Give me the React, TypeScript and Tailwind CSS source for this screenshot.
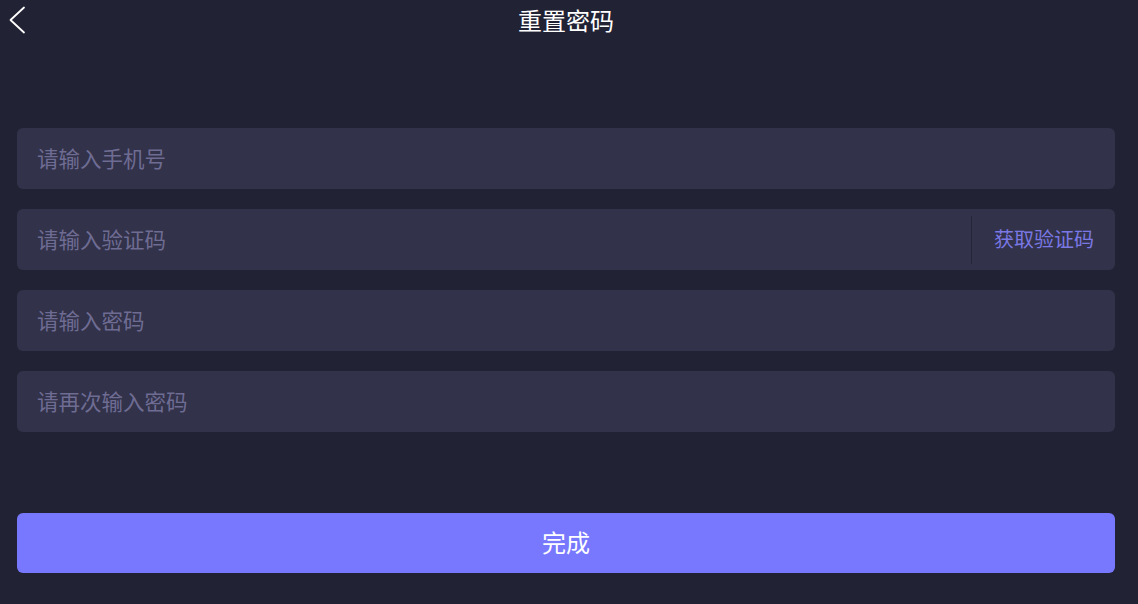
import React from 'react';

const font = { fontFamily: '"Noto Sans CJK SC", "Noto Sans", sans-serif' };

const Field = ({ placeholder, children }: { placeholder: string; children?: React.ReactNode }) => (
  <div className="flex h-[61px] items-center rounded-[6px] bg-[#32324a]">
    <input
      className="h-full min-w-0 flex-1 bg-transparent pb-[3px] pl-[20px] text-[21.5px] text-white outline-none placeholder:text-[#6e6c93]"
      placeholder={placeholder}
    />
    {children}
  </div>
);

const App = () => {
  return (
    <div className="h-[604px] w-[1138px] overflow-hidden bg-[#222235] text-white" style={font}>
      {/* Header */}
      <header className="relative flex h-[40px] items-center justify-center pl-[17px] pr-[23px]">
        <button className="absolute left-[8px] top-[5px] p-0">
          <svg width="20" height="30" viewBox="0 0 20 30" fill="none">
            <path d="M16 2.5 L2.5 15 L16 27.5" stroke="#ffffff" strokeWidth="1.8" strokeLinecap="round" strokeLinejoin="round" />
          </svg>
        </button>
        <h1 className="text-[24px] font-normal leading-none">重置密码</h1>
      </header>

      <div className="pl-[17px] pr-[23px] pt-[88px]">
        <div className="flex flex-col gap-[20px]">
          <Field placeholder="请输入手机号" />
          <Field placeholder="请输入验证码">
            <div className="h-[48px] w-px bg-[#25253a]" />
            <button className="pb-[2px] pl-[22px] pr-[21px] text-[20px] text-[#7a78e4]">获取验证码</button>
          </Field>
          <Field placeholder="请输入密码" />
          <Field placeholder="请再次输入密码" />
        </div>

        <button className="mt-[81px] flex h-[60px] w-full items-center justify-center rounded-[6px] bg-[#7878fe] pb-[2px] text-[24px] text-white">
          完成
        </button>
      </div>
    </div>
  );
};

export default App;
